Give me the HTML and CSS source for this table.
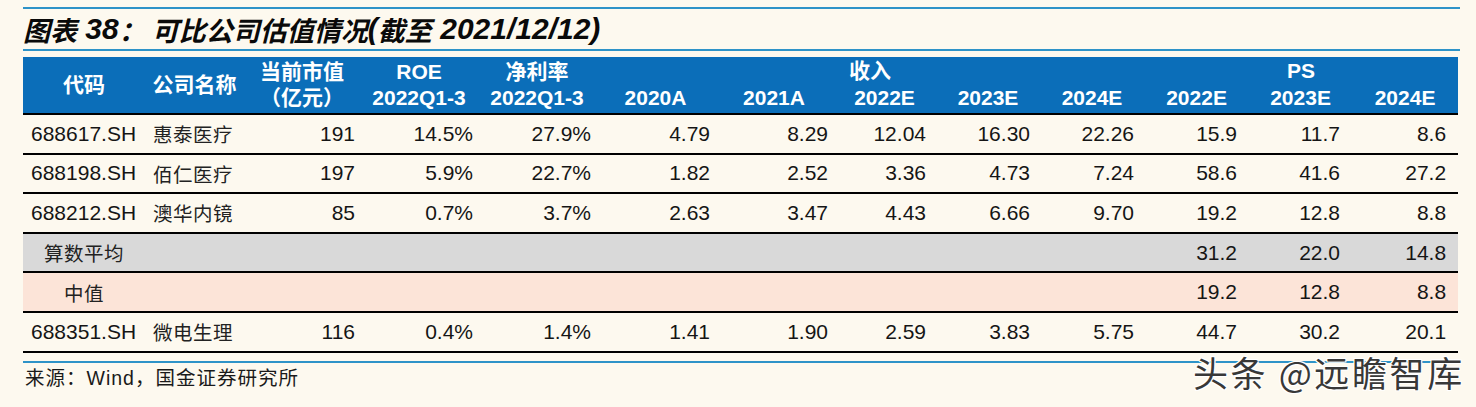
FILE: index.html
```html
<!DOCTYPE html>
<html lang="zh-CN">
<head>
<meta charset="utf-8">
<title>可比公司估值情况</title>
<link rel="stylesheet" href="styles.css">
</head>
<body>
<div class="page">
  <div class="rule"></div>
  <h1 class="title"><span class="t-cn">图表</span><span class="t-num">&nbsp;38</span><span class="t-cn">：&nbsp;可比公司估值情况</span><span class="t-num">(</span><span class="t-cn">截至</span><span class="t-num">&nbsp;2021/12/12)</span></h1>
  <div class="rule"></div>
  <table class="comp">
    <colgroup>
      <col style="width:122px"><col style="width:99px"><col style="width:116px"><col style="width:118px">
      <col style="width:118px"><col style="width:119px"><col style="width:118px"><col style="width:103px">
      <col style="width:104px"><col style="width:104px"><col style="width:105px"><col style="width:103px">
      <col style="width:106px">
    </colgroup>
    <thead>
      <tr class="h1">
        <th rowspan="2">代码</th>
        <th rowspan="2">公司名称</th>
        <th rowspan="2">当前市值<br>（亿元）</th>
        <th rowspan="2">ROE<br>2022Q1-3</th>
        <th rowspan="2">净利率<br>2022Q1-3</th>
        <th colspan="5">收入</th>
        <th colspan="3">PS</th>
      </tr>
      <tr class="h2">
        <th>2020A</th><th>2021A</th><th>2022E</th><th>2023E</th><th>2024E</th>
        <th>2022E</th><th>2023E</th><th>2024E</th>
      </tr>
    </thead>
    <tbody>
      <tr>
        <td class="code">688617.SH</td><td class="name">惠泰医疗</td>
        <td class="n a">191</td><td class="n a">14.5%</td><td class="n a">27.9%</td><td class="n a">4.79</td><td class="n a">8.29</td>
        <td class="n b">12.04</td><td class="n b">16.30</td><td class="n b">22.26</td><td class="n c">15.9</td><td class="n c">11.7</td><td class="n c">8.6</td>
      </tr>
      <tr>
        <td class="code">688198.SH</td><td class="name">佰仁医疗</td>
        <td class="n a">197</td><td class="n a">5.9%</td><td class="n a">22.7%</td><td class="n a">1.82</td><td class="n a">2.52</td>
        <td class="n b">3.36</td><td class="n b">4.73</td><td class="n b">7.24</td><td class="n c">58.6</td><td class="n c">41.6</td><td class="n c">27.2</td>
      </tr>
      <tr>
        <td class="code">688212.SH</td><td class="name">澳华内镜</td>
        <td class="n a">85</td><td class="n a">0.7%</td><td class="n a">3.7%</td><td class="n a">2.63</td><td class="n a">3.47</td>
        <td class="n b">4.43</td><td class="n b">6.66</td><td class="n b">9.70</td><td class="n c">19.2</td><td class="n c">12.8</td><td class="n c">8.8</td>
      </tr>
      <tr class="avg">
        <td class="label">算数平均</td><td></td>
        <td></td><td></td><td></td><td></td><td></td>
        <td></td><td></td><td></td><td class="n c">31.2</td><td class="n c">22.0</td><td class="n c">14.8</td>
      </tr>
      <tr class="med">
        <td class="label">中值</td><td></td>
        <td></td><td></td><td></td><td></td><td></td>
        <td></td><td></td><td></td><td class="n c">19.2</td><td class="n c">12.8</td><td class="n c">8.8</td>
      </tr>
      <tr>
        <td class="code">688351.SH</td><td class="name">微电生理</td>
        <td class="n a">116</td><td class="n a">0.4%</td><td class="n a">1.4%</td><td class="n a">1.41</td><td class="n a">1.90</td>
        <td class="n b">2.59</td><td class="n b">3.83</td><td class="n b">5.75</td><td class="n c">44.7</td><td class="n c">30.2</td><td class="n c">20.1</td>
      </tr>
    </tbody>
  </table>
  <div class="rule bottom"></div>
  <p class="source">来源：Wind，国金证券研究所</p>
  <div class="watermark">头条 @远瞻智库</div>
</div>
</body>
</html>
```
FILE: styles.css
```css
html, body {
  margin: 0;
  padding: 0;
  background: #fdf9ef;
}

.page {
  position: relative;
  width: 1437px;
  height: 400px;
  padding: 7px 0 0 23px;
  box-sizing: content-box;
  font-family: "Liberation Sans", "Noto Sans CJK SC", sans-serif;
  color: #111;
}

.rule {
  height: 2px;
  background: #2e93c8;
}

.title {
  margin: 0;
  height: 40px;
  display: flex;
  align-items: center;
  font-size: 28px;
  font-weight: bold;
  font-style: italic;
  color: #0a0a0a;
  white-space: pre;
  line-height: 1;
}

.t-cn {
  font-family: "Noto Sans CJK SC", sans-serif;
  font-size: 27px;
  font-weight: bold;
  font-style: italic;
}

.t-num {
  font-family: "Liberation Sans", sans-serif;
  font-size: 30px;
}

.comp {
  margin-top: 6px;
  width: 1435px;
  table-layout: fixed;
  border-collapse: collapse;
  border-spacing: 0;
  font-size: 21px;
}

.comp th {
  background: #0b6eb9;
  color: #fff;
  font-weight: bold;
  text-align: center;
  padding: 0;
  line-height: 26px;
  white-space: nowrap;
}

.comp thead .h1 th { height: 28px; vertical-align: middle; }
.comp thead .h2 th { height: 23px; vertical-align: middle; padding-bottom: 2px; }
.comp thead tr.h2 th, .comp thead th[rowspan] { border-bottom: 2px solid #000; }

.comp td {
  height: 37.6px;
  padding: 0;
  border-bottom: 2px solid #000;
  white-space: nowrap;
  color: #151515;
  vertical-align: middle;
}

.comp tbody tr {
  height: 39.6px;
}

.comp td.code { padding-left: 8px; }
.comp td.name {
  padding-left: 8px;
  font-family: "Noto Sans CJK SC", sans-serif;
  font-size: 19.5px;
  letter-spacing: 0.5px;
  font-weight: normal;
  color: #222;
}

.comp td.n { text-align: right; }
.comp td.a { padding-right: 5px; }
.comp td.b { padding-right: 10px; }
.comp td.c { padding-right: 12px; }

.comp td.label {
  text-align: center;
  font-family: "Noto Sans CJK SC", sans-serif;
  font-size: 19.5px;
  letter-spacing: 0.5px;
  color: #222;
}

.comp tr.avg td { background: #d9d9d9; }
.comp tr.med td { background: #fce4d8; }

.rule.bottom {
  margin-top: 8px;
}

.source {
  margin: 3px 0 0 2px;
  font-size: 19.5px;
  letter-spacing: 1px;
  line-height: 24px;
  font-family: "Liberation Sans", "Noto Sans CJK SC", sans-serif;
  color: #1a1a1a;
}

.watermark {
  position: absolute;
  left: 1193px;
  top: 349px;
  font-family: "Noto Sans CJK SC", sans-serif;
  font-size: 35px;
  letter-spacing: 2.6px;
  line-height: 46px;
  color: #383838;
  white-space: nowrap;
  text-shadow: 1px 1px 0 #fff, -1px -1px 0 #fff, 1px -1px 0 #fff, -1px 1px 0 #fff;
}
```
